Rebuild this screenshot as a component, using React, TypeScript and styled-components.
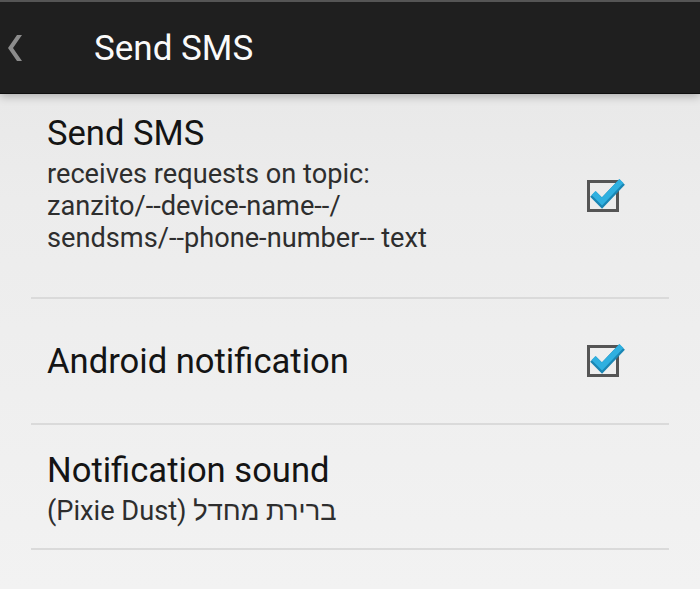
import React from "react";
import styled, { createGlobalStyle } from "styled-components";

const Global = createGlobalStyle`
  html, body { margin: 0; padding: 0; }
  body {
    width: 700px;
    height: 589px;
    overflow: hidden;
    background: linear-gradient(180deg, #e6e6e6 0px, #ececec 200px, #f2f2f2 589px);
    font-family: Roboto, "Noto Sans", "Liberation Sans", sans-serif;
  }
`;

const Page = styled.div`
  display: flex;
  flex-direction: column;
  height: 589px;
`;

const ActionBar = styled.header`
  position: relative;
  z-index: 1;
  display: flex;
  align-items: center;
  height: 91px;
  background: #1f1f1f;
  border-top: 2px solid #555;
  border-bottom: 1px solid #0e0e0e;
  box-shadow: 0 2px 9px rgba(0, 0, 0, 0.28);
`;

const Back = styled.svg`
  margin-left: 7px;
  width: 16px;
  height: 26px;
  flex: none;
`;

const BarTitle = styled.h1`
  margin: 2px 0 0 71px;
  font-weight: 400;
  font-size: 35px;
  line-height: 40px;
  color: #fafafa;
`;

const List = styled.div`
  display: flex;
  flex-direction: column;
  margin: 0 31px;
`;

const Item = styled.div`
  display: flex;
  align-items: center;
  padding: 0 44px 0 16px;
  border-bottom: 2px solid #dadada;
`;

const Texts = styled.div<{ $top: number; $bottom: number }>`
  flex: 1;
  display: flex;
  flex-direction: column;
  gap: 5px;
  padding: ${(p) => p.$top}px 0 ${(p) => p.$bottom}px;
`;

const Title = styled.div`
  font-size: 34.6px;
  line-height: 40px;
  color: #141414;
`;

const Summary = styled.div`
  font-size: 27.2px;
  line-height: 32px;
  color: #2e2e2e;
`;

const Box = styled.svg`
  width: 40px;
  height: 40px;
  flex: none;
`;

const CheckBox = () => (
  <Box viewBox="0 0 40 40">
    <rect x="3.5" y="5.5" width="29" height="29" fill="none" stroke="#555" strokeWidth="3" />
    <path d="M8 18 L17 27 L37 6" fill="none" stroke="#1a86b4" strokeWidth="8" strokeLinejoin="miter" />
    <path d="M8.5 17 L17 25.5 L36.5 5" fill="none" stroke="#2fb0e0" strokeWidth="5.5" strokeLinejoin="miter" />
  </Box>
);

export default function App() {
  return (
    <Page>
      <Global />
      <ActionBar>
        <Back viewBox="0 0 16 26">
          <polygon points="15,0 6,13 15,26 10,26 1,13 10,0" fill="#8c8c8c" />
        </Back>
        <BarTitle>Send SMS</BarTitle>
      </ActionBar>
      <List>
        <Item>
          <Texts $top={19} $bottom={43}>
            <Title>Send SMS</Title>
            <Summary>
              receives requests on topic:
              <br />
              zanzito/--device-name--/
              <br />
              sendsms/--phone-number-- text
            </Summary>
          </Texts>
          <CheckBox />
        </Item>
        <Item>
          <Texts $top={42} $bottom={42}>
            <Title>Android notification</Title>
          </Texts>
          <CheckBox />
        </Item>
        <Item>
          <Texts $top={25} $bottom={21}>
            <Title>Notification sound</Title>
            <Summary>(Pixie Dust) ברירת מחדל</Summary>
          </Texts>
        </Item>
      </List>
    </Page>
  );
}
